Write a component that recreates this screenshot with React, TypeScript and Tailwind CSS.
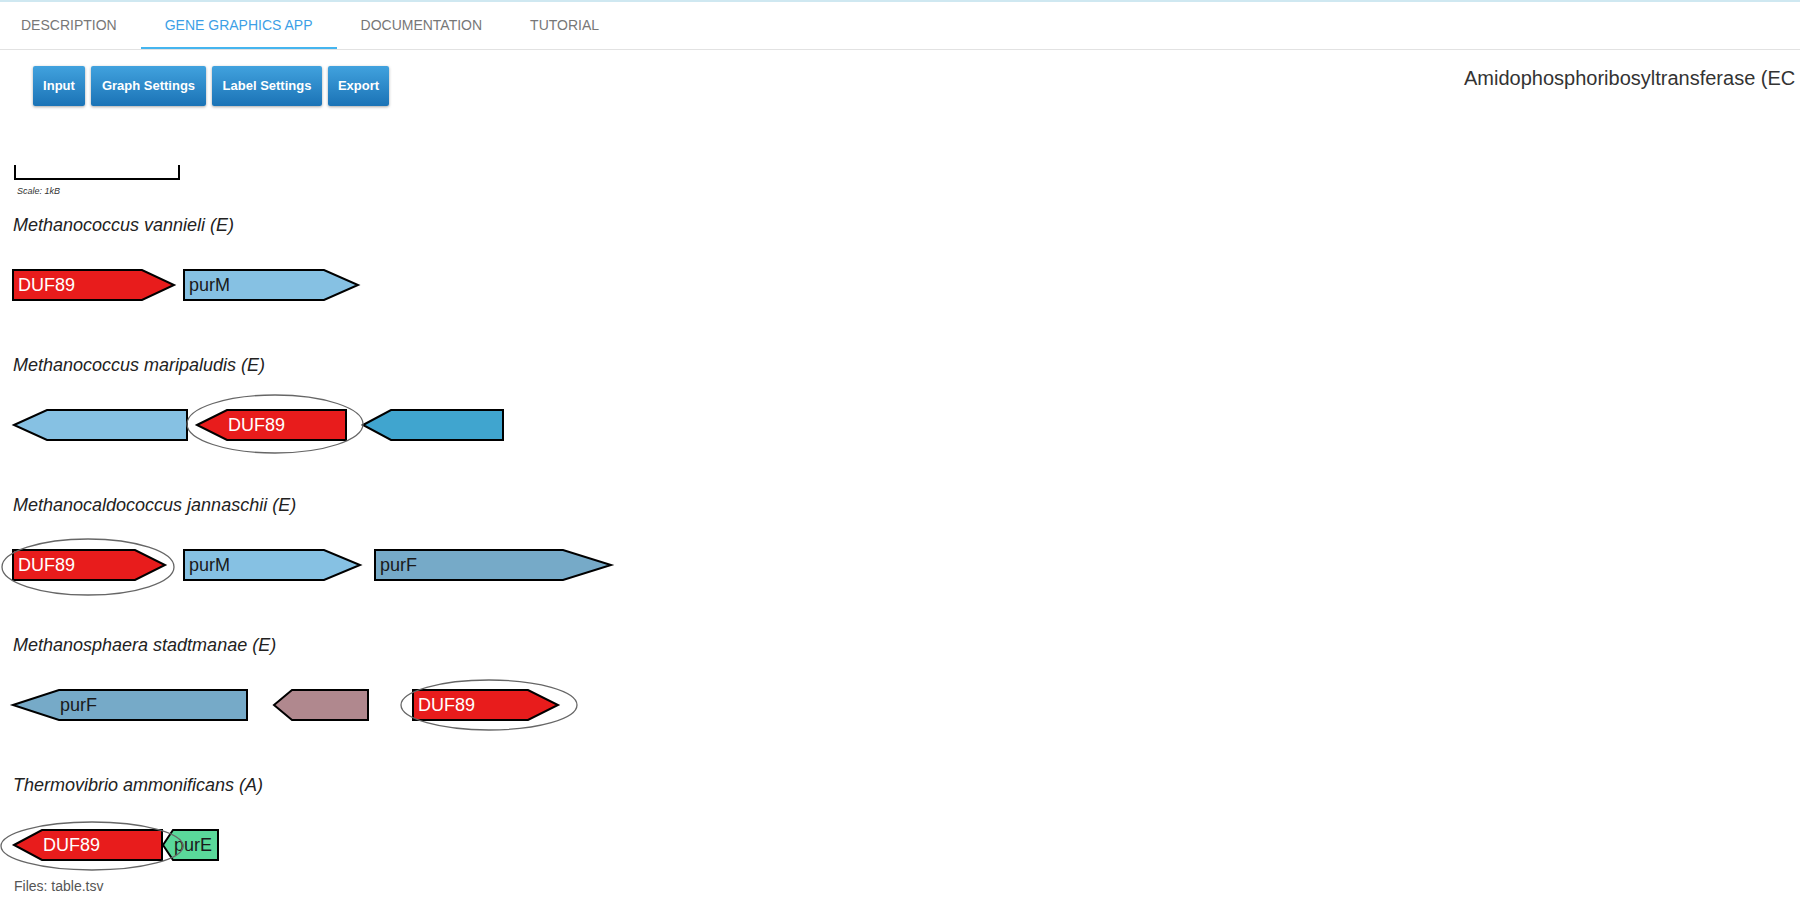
import React from 'react';

type Gene = {
  dir: 'f' | 'r';
  x0: number; // left end
  xb: number; // where the arrow head meets the body
  x1: number; // right end
  fill: string;
  label?: string;
  light?: boolean; // white label
};

type Genome = {
  name: string;
  genes: Gene[];
  ring?: { cx: number; cy: number; rx: number; ry: number };
};

const RED = '#e81c1c';
const SKY = '#86c1e3';
const TEAL = '#40a5cf';
const STEEL = '#76aac8';
const MAUVE = '#b0888e';
const MINT = '#5ad89a';

const genomes: Genome[] = [
  {
    name: 'Methanococcus vannieli (E)',
    genes: [
      { dir: 'f', x0: 13, xb: 142, x1: 174, fill: RED, label: 'DUF89', light: true },
      { dir: 'f', x0: 184, xb: 324, x1: 358, fill: SKY, label: 'purM' },
    ],
  },
  {
    name: 'Methanococcus maripaludis (E)',
    genes: [
      { dir: 'r', x0: 14, xb: 47, x1: 187, fill: SKY },
      { dir: 'r', x0: 197, xb: 227, x1: 346, fill: RED, label: 'DUF89', light: true },
      { dir: 'r', x0: 363, xb: 391, x1: 503, fill: TEAL },
    ],
    ring: { cx: 275, cy: 35, rx: 88, ry: 29 },
  },
  {
    name: 'Methanocaldococcus jannaschii (E)',
    genes: [
      { dir: 'f', x0: 13, xb: 135, x1: 165, fill: RED, label: 'DUF89', light: true },
      { dir: 'f', x0: 184, xb: 324, x1: 360, fill: SKY, label: 'purM' },
      { dir: 'f', x0: 375, xb: 563, x1: 611, fill: STEEL, label: 'purF' },
    ],
    ring: { cx: 88, cy: 38, rx: 86, ry: 28 },
  },
  {
    name: 'Methanosphaera stadtmanae (E)',
    genes: [
      { dir: 'r', x0: 13, xb: 59, x1: 247, fill: STEEL, label: 'purF' },
      { dir: 'r', x0: 274, xb: 292, x1: 368, fill: MAUVE },
      { dir: 'f', x0: 413, xb: 528, x1: 558, fill: RED, label: 'DUF89', light: true },
    ],
    ring: { cx: 489, cy: 36, rx: 88, ry: 25 },
  },
  {
    name: 'Thermovibrio ammonificans (A)',
    genes: [
      { dir: 'r', x0: 14, xb: 42, x1: 162, fill: RED, label: 'DUF89', light: true },
      { dir: 'r', x0: 163, xb: 173, x1: 218, fill: MINT, label: 'purE' },
    ],
    ring: { cx: 92, cy: 37, rx: 91, ry: 24 },
  },
];

const TOP = 21;
const BOT = 51;
const MID = 36;

function genePoints(g: Gene) {
  if (g.dir === 'f') {
    return `${g.x0},${TOP} ${g.xb},${TOP} ${g.x1},${MID} ${g.xb},${BOT} ${g.x0},${BOT}`;
  }
  return `${g.x0},${MID} ${g.xb},${TOP} ${g.x1},${TOP} ${g.x1},${BOT} ${g.xb},${BOT}`;
}

function GeneRow({ genome }: { genome: Genome }) {
  return (
    <svg width="700" height="70" className="block">
      {genome.genes.map((g, i) => (
        <g key={i}>
          <polygon points={genePoints(g)} fill={g.fill} stroke="#000" strokeWidth="2" />
          {g.label && (
            <text
              x={g.dir === 'f' ? g.x0 + 5 : g.xb + 1}
              y={MID + 6}
              fontFamily="'Liberation Sans', Arial, sans-serif"
              fontSize="18"
              fill={g.light ? '#ffffff' : '#1a1a1a'}
            >
              {g.label}
            </text>
          )}
        </g>
      ))}
      {genome.ring && (
        <ellipse
          cx={genome.ring.cx}
          cy={genome.ring.cy}
          rx={genome.ring.rx}
          ry={genome.ring.ry}
          fill="none"
          stroke="#666"
          strokeWidth="1.3"
        />
      )}
    </svg>
  );
}

const tabs = ['DESCRIPTION', 'GENE GRAPHICS APP', 'DOCUMENTATION', 'TUTORIAL'];
const buttons = [
  { label: 'Input', w: 'w-[52px]' },
  { label: 'Graph Settings', w: 'w-[115px]' },
  { label: 'Label Settings', w: 'w-[110px]' },
  { label: 'Export', w: 'w-[61px]' },
];

export default function App() {
  return (
    <div className="w-[1800px] h-[900px] overflow-hidden bg-white font-['Liberation_Sans',Arial,sans-serif] text-[#333]">
      {/* tab strip */}
      <div className="h-[50px] border-t-2 border-[#cfe8f1] border-b border-b-[#e2e2e2] flex">
        {tabs.map((t, i) => (
          <div
            key={t}
            className={`h-[47px] px-[24px] flex items-center text-[14px] ${i === 0 ? '-ml-[3px]' : ''} ${
              i === 1 ? 'text-[#3d9fe6] border-b-2 border-[#45b5ef] pt-[2px]' : 'text-[#777]'
            }`}
          >
            {t}
          </div>
        ))}
      </div>

      {/* toolbar */}
      <div className="flex items-start mt-[16px]">
        <div className="flex gap-[6px] ml-[33px]">
          {buttons.map((b) => (
            <button
              key={b.label}
              className={`${b.w} h-[40px] rounded-[2px] bg-gradient-to-b from-[#41a2de] to-[#1a73b6] text-white text-[13px] font-bold shadow-[0_1px_3px_rgba(0,0,0,0.35)] whitespace-nowrap`}
            >
              {b.label}
            </button>
          ))}
        </div>
        <div className="ml-auto w-[336px] whitespace-nowrap text-[20px] text-[#333] leading-[24px]">
          Amidophosphoribosyltransferase (EC
        </div>
      </div>

      {/* scale bar */}
      <div className="mt-[44px] h-[50px]">
        <svg width="200" height="50" className="block">
          <path d="M15 15 V29 H179 V15" fill="none" stroke="#000" strokeWidth="2" />
          <text x="17" y="44" fontSize="9" fontStyle="italic" fill="#333" fontFamily="'Liberation Sans', Arial, sans-serif">
            Scale: 1kB
          </text>
        </svg>
      </div>

      {/* genomes */}
      <div className="flex flex-col mt-[15px]">
        {genomes.map((g, i) => (
          <div key={g.name} className={i < genomes.length - 1 ? 'h-[140px]' : ''}>
            <div className="pl-[13px] h-[20px] leading-[20px] text-[18px] italic text-[#222]">{g.name}</div>
            <div className="mt-[14px]">
              <GeneRow genome={g} />
            </div>
          </div>
        ))}
        <div className="pl-[14px] text-[14px] leading-[16px] text-[#555] -mt-[1px]">Files: table.tsv</div>
      </div>
    </div>
  );
}
